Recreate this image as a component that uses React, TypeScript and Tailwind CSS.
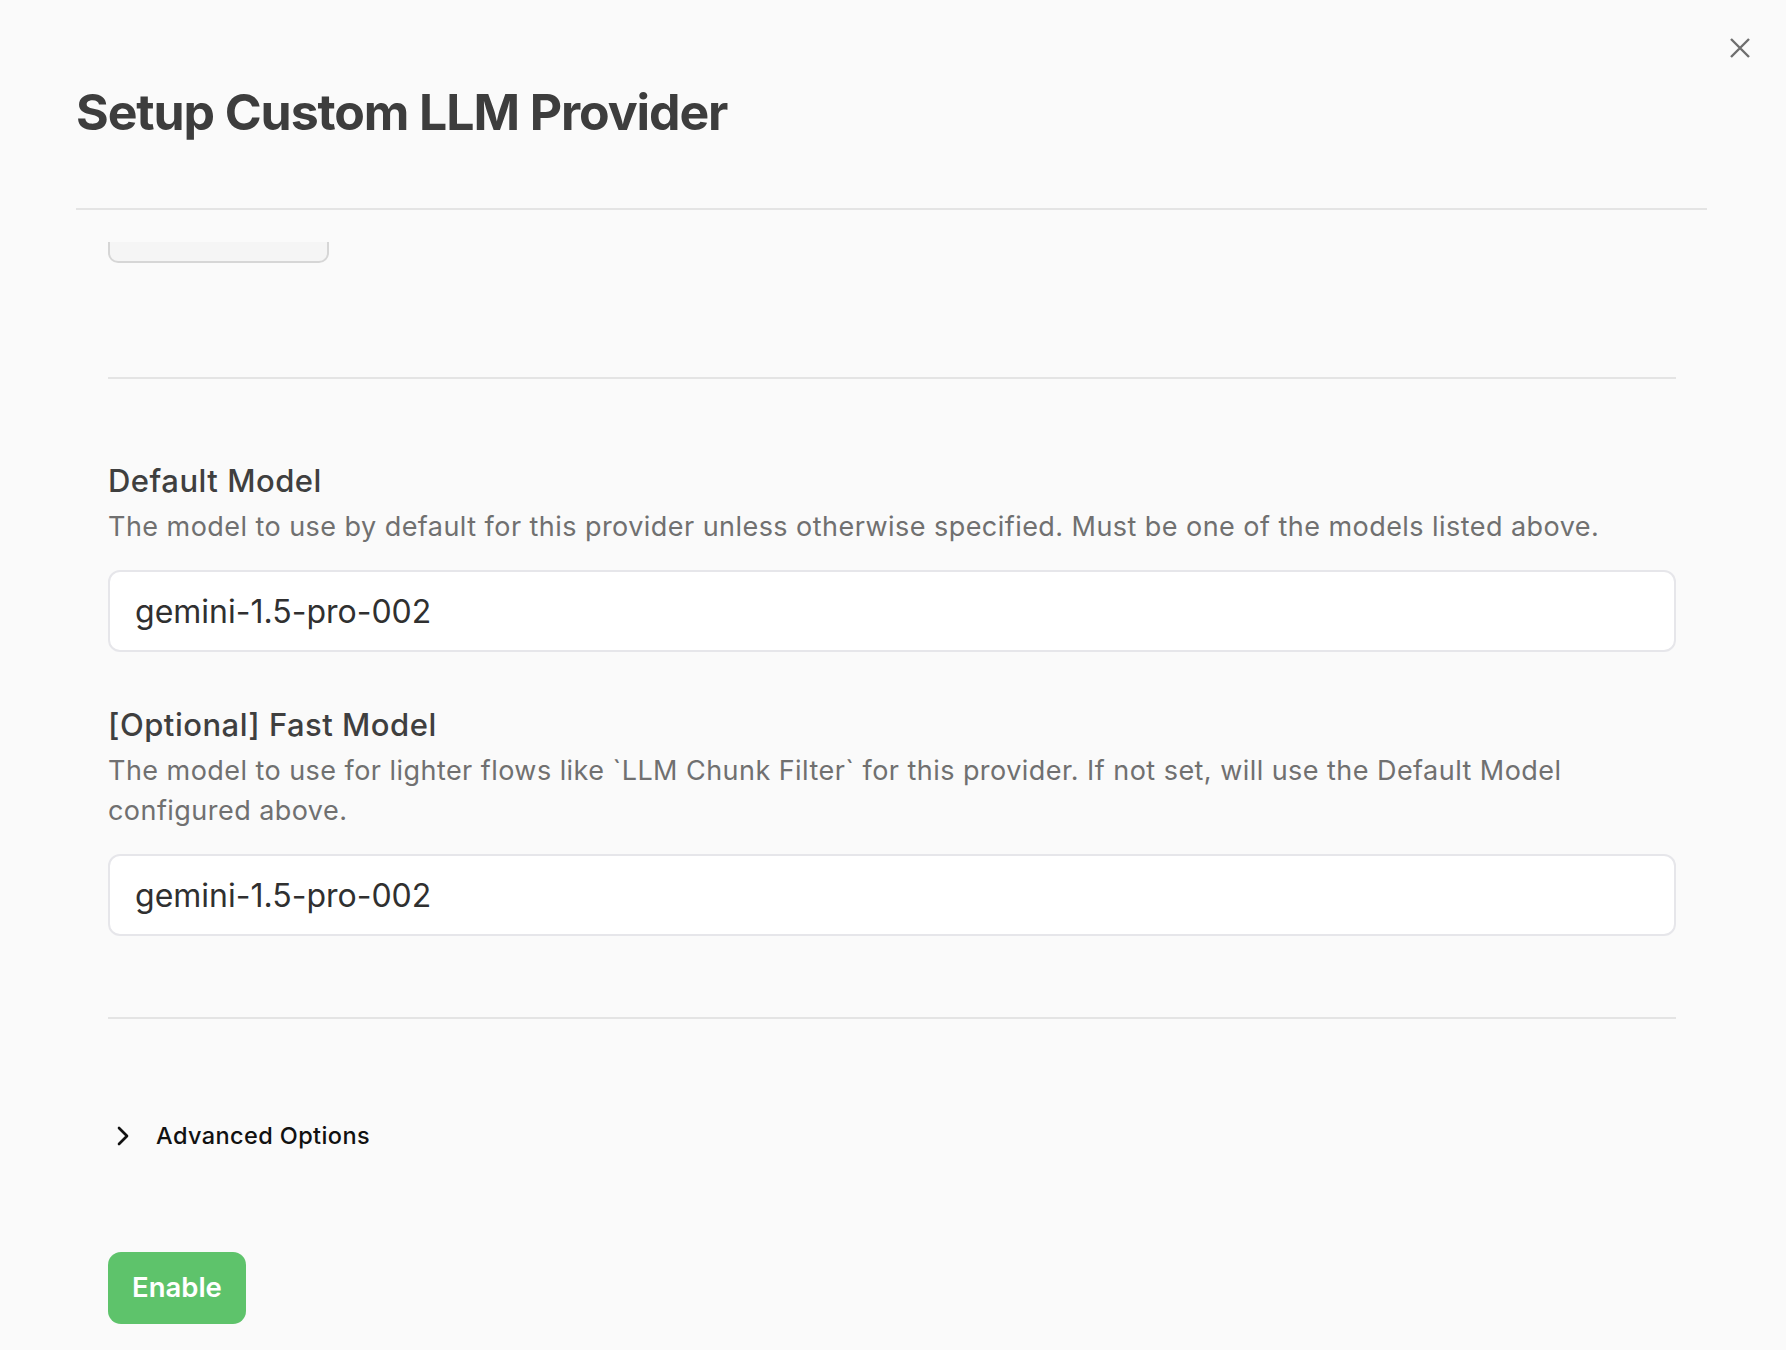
import { ChevronRight } from "lucide-react";

const font = { fontFamily: "Inter, 'Noto Sans', sans-serif" };

const ModelField = ({
    label,
    description,
    value,
    className = "",
    inputClassName = "",
}: {
    label: string;
    description: string;
    value: string;
    className?: string;
    inputClassName?: string;
}) => (
    <div className={className}>
        <p className="text-[31px] leading-[48px] font-medium tracking-[0.5px] text-[#3f3f3f]">{label}</p>
        <p className="mt-[2px] text-[27px] leading-[40px] tracking-[0.45px] text-[#707070]">{description}</p>
        <input
            readOnly
            value={value}
            className={`block w-full h-[82px] rounded-[12px] border-2 border-[#e6e6ea] bg-white pl-[25px] text-[32px] text-[#303030] outline-none ${inputClassName}`}
        />
    </div>
);

export default function App() {
    return (
        <div className="relative min-h-[1350px] w-full bg-[#fafafa]" style={font}>
            {/* close */}
            <button className="absolute right-[36px] top-[38px] w-[20px] h-[20px] text-[#6e6e6e]">
                <svg viewBox="0 0 20 20" className="w-[20px] h-[20px]" fill="none" stroke="currentColor" strokeWidth="2.4">
                    <path d="M1 1 19 19M19 1 1 19" />
                </svg>
            </button>

            {/* header */}
            <div className="ml-[76px] mr-[79px] pt-[82px] pb-[66px] border-b-2 border-[#e4e4e4]">
                <h1 className="text-[50px] leading-[60px] font-bold text-[#3d3d3d] tracking-[-1.1px]">
                    Setup Custom LLM Provider
                </h1>
            </div>

            {/* scrolled body */}
            <div className="ml-[108px] mr-[110px] mt-[32px]">
                <div className="h-[21px] w-[221px] rounded-b-[10px] border-2 border-t-0 border-[#d6d6d6] bg-[#f5f5f5]" />

                <div className="mt-[114px] border-t-2 border-[#e4e4e4]" />

                <ModelField
                    className="mt-[78px]"
                    inputClassName="mt-[23px]"
                    label="Default Model"
                    description="The model to use by default for this provider unless otherwise specified. Must be one of the models listed above."
                    value="gemini-1.5-pro-002"
                />

                <ModelField
                    className="mt-[49px]"
                    inputClassName="mt-[23px]"
                    label="[Optional] Fast Model"
                    description="The model to use for lighter flows like `LLM Chunk Filter` for this provider. If not set, will use the Default Model configured above."
                    value="gemini-1.5-pro-002"
                />

                <div className="mt-[81px] border-t-2 border-[#e4e4e4]" />

                <div className="mt-[100px] flex items-center h-[33px]">
                    <ChevronRight className="w-[32px] h-[32px] text-[#111] ml-[-1px]" strokeWidth={2} />
                    <span className="ml-[17px] text-[23.5px] leading-[33px] font-medium tracking-[0.4px] text-[#111]">
                        Advanced Options
                    </span>
                </div>

                <button className="mt-[100px] block h-[72px] rounded-[13px] bg-[#5ec36b] px-[24px] text-[27.5px] font-semibold text-white">
                    Enable
                </button>
            </div>
        </div>
    );
}
